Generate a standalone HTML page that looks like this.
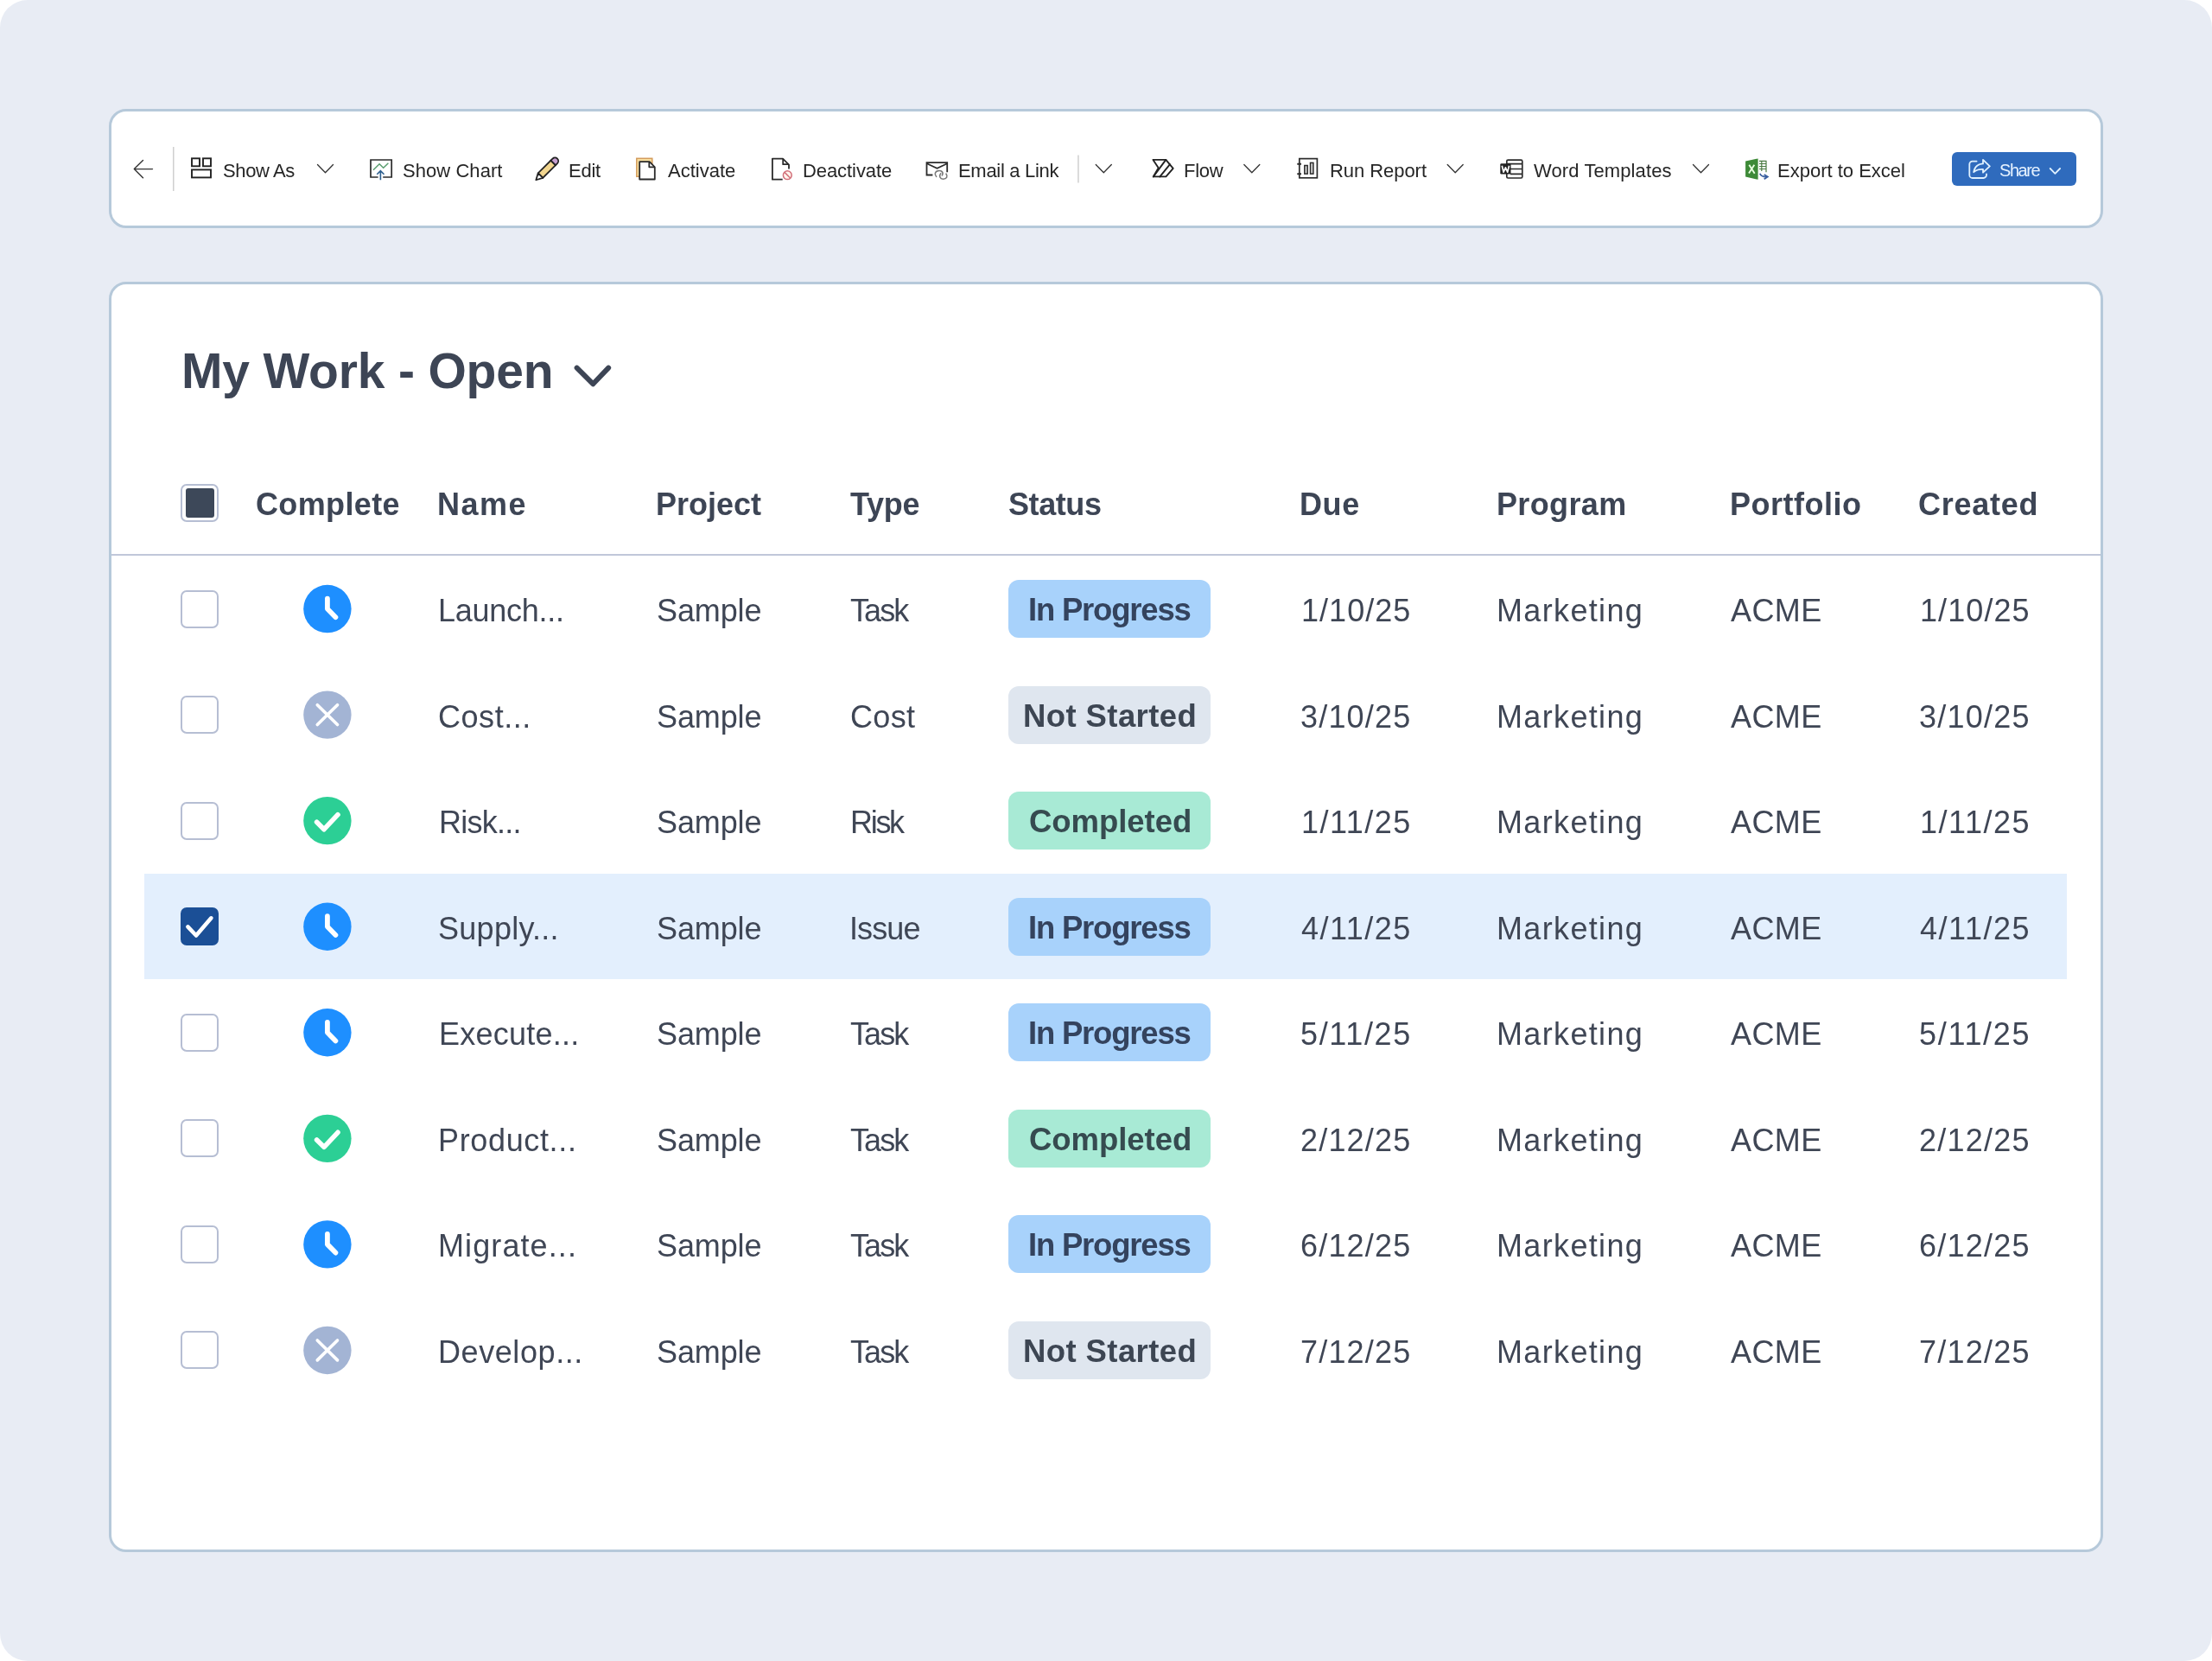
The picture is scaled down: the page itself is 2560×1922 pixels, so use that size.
<!DOCTYPE html>
<html>
<head>
<meta charset="utf-8">
<style>
html,body{margin:0;padding:0;width:2560px;height:1922px;overflow:hidden;background:#ffffff;}
body{font-family:"Liberation Sans",sans-serif;position:relative;}
#page{position:absolute;left:0;top:0;width:2560px;height:1922px;background:#e8ecf4;border-radius:32px;}
.card{position:absolute;left:126px;width:2302px;background:#fff;border:3px solid #b6c9da;border-radius:20px;}
#tb{top:126px;height:132px;}
#tbl{top:326px;height:1464px;}
.t{position:absolute;white-space:nowrap;line-height:1;will-change:transform;}
.row{position:absolute;left:0;width:2560px;height:122.55px;}
.hl{position:absolute;left:167px;width:2225px;top:0;height:122.55px;background:#e3effd;}
.cb{position:absolute;left:209px;top:39.3px;width:44px;height:44px;box-sizing:border-box;border:2.8px solid #b6bed3;border-radius:7px;background:#fff;}
.cb.on{background:#1b4f96;border-color:#1b4f96;}
.badge{position:absolute;left:1167px;top:27.8px;width:234px;height:67px;border-radius:12px;}
.ip{background:#a8d2fb;}
.ns{background:#dfe6ef;}
.co{background:#a8ead5;}
svg{position:absolute;left:0;top:0;}
</style>
</head>
<body>
<div id="page"></div>
<div class="card" id="tb"></div>
<div class="card" id="tbl"></div>
<div style="position:absolute;left:2259px;top:176px;width:144px;height:39px;border-radius:6px;background:#2f6bbd;"></div>
<div style="position:absolute;left:209px;top:560px;width:44px;height:44px;box-sizing:border-box;border:2.8px solid #b6bed3;border-radius:7px;background:#fff;"></div>
<div style="position:absolute;left:214.5px;top:565.3px;width:33.5px;height:33.5px;border-radius:3px;background:#3d4859;"></div>
<div style="position:absolute;left:129px;width:2302px;top:641px;height:2.2px;background:#c0c7d9;"></div>
<div class="row" style="top:643.30px"><div class="cb"></div><div class="badge ip"></div></div>
<div class="row" style="top:765.85px"><div class="cb"></div><div class="badge ns"></div></div>
<div class="row" style="top:888.40px"><div class="cb"></div><div class="badge co"></div></div>
<div class="row" style="top:1010.95px"><div class="hl"></div><div class="cb on"></div><div class="badge ip"></div></div>
<div class="row" style="top:1133.50px"><div class="cb"></div><div class="badge ip"></div></div>
<div class="row" style="top:1256.05px"><div class="cb"></div><div class="badge co"></div></div>
<div class="row" style="top:1378.60px"><div class="cb"></div><div class="badge ip"></div></div>
<div class="row" style="top:1501.15px"><div class="cb"></div><div class="badge ns"></div></div>
<div class="t" style="left:258.30px;top:186.67px;font-size:22px;color:#262626;letter-spacing:-0.386px">Show As</div>
<div class="t" style="left:465.50px;top:186.67px;font-size:22px;color:#262626;letter-spacing:0.052px">Show Chart</div>
<div class="t" style="left:658.00px;top:186.67px;font-size:22px;color:#262626;letter-spacing:-0.232px">Edit</div>
<div class="t" style="left:772.80px;top:186.67px;font-size:22px;color:#262626;letter-spacing:0.011px">Activate</div>
<div class="t" style="left:928.80px;top:186.67px;font-size:22px;color:#262626;letter-spacing:-0.078px">Deactivate</div>
<div class="t" style="left:1109.20px;top:186.67px;font-size:22px;color:#262626;letter-spacing:-0.312px">Email a Link</div>
<div class="t" style="left:1370.40px;top:186.67px;font-size:22px;color:#262626;letter-spacing:-0.254px">Flow</div>
<div class="t" style="left:1538.90px;top:186.67px;font-size:22px;color:#262626;letter-spacing:-0.055px">Run Report</div>
<div class="t" style="left:1774.50px;top:186.67px;font-size:22px;color:#262626;letter-spacing:0.104px">Word Templates</div>
<div class="t" style="left:2057.40px;top:186.67px;font-size:22px;color:#262626;letter-spacing:0.003px">Export to Excel</div>
<div class="t" style="left:2313.70px;top:186.97px;font-size:20px;color:#e6f2ff;letter-spacing:-1.437px">Share</div>
<div class="t" style="left:210.20px;top:400.74px;font-size:57px;font-weight:bold;color:#3d4555;letter-spacing:-0.169px">My Work - Open</div>
<div class="t" style="left:295.70px;top:566.32px;font-size:36px;font-weight:bold;color:#3d4555;letter-spacing:0.357px">Complete</div>
<div class="t" style="left:506.30px;top:566.32px;font-size:36px;font-weight:bold;color:#3d4555;letter-spacing:1.457px">Name</div>
<div class="t" style="left:759.40px;top:566.32px;font-size:36px;font-weight:bold;color:#3d4555;letter-spacing:0.007px">Project</div>
<div class="t" style="left:983.50px;top:566.32px;font-size:36px;font-weight:bold;color:#3d4555;letter-spacing:-0.243px">Type</div>
<div class="t" style="left:1167.00px;top:566.32px;font-size:36px;font-weight:bold;color:#3d4555;letter-spacing:-0.420px">Status</div>
<div class="t" style="left:1504.10px;top:566.32px;font-size:36px;font-weight:bold;color:#3d4555;letter-spacing:0.606px">Due</div>
<div class="t" style="left:1731.50px;top:566.32px;font-size:36px;font-weight:bold;color:#3d4555;letter-spacing:0.361px">Program</div>
<div class="t" style="left:2002.40px;top:566.32px;font-size:36px;font-weight:bold;color:#3d4555;letter-spacing:0.490px">Portfolio</div>
<div class="t" style="left:2219.90px;top:566.32px;font-size:36px;font-weight:bold;color:#3d4555;letter-spacing:0.740px">Created</div>
<div class="t" style="left:507.00px;top:689.02px;font-size:36px;color:#3f4655;letter-spacing:-0.264px">Launch...</div>
<div class="t" style="left:760.20px;top:689.02px;font-size:36px;color:#3f4655;letter-spacing:-0.128px">Sample</div>
<div class="t" style="left:983.60px;top:689.02px;font-size:36px;color:#3f4655;letter-spacing:-1.940px">Task</div>
<div class="t" style="left:1505.50px;top:689.02px;font-size:36px;color:#3f4655;letter-spacing:1.035px">1/10/25</div>
<div class="t" style="left:1732.10px;top:689.02px;font-size:36px;color:#3f4655;letter-spacing:1.345px">Marketing</div>
<div class="t" style="left:2003.40px;top:689.02px;font-size:36px;color:#3f4655;letter-spacing:0.401px">ACME</div>
<div class="t" style="left:2221.70px;top:689.02px;font-size:36px;color:#3f4655;letter-spacing:1.085px">1/10/25</div>
<div class="t" style="left:1190.10px;top:688.10px;font-size:36.5px;font-weight:bold;color:#34435e;letter-spacing:-1.202px">In Progress</div>
<div class="t" style="left:507.20px;top:811.57px;font-size:36px;color:#3f4655;letter-spacing:0.546px">Cost...</div>
<div class="t" style="left:760.20px;top:811.57px;font-size:36px;color:#3f4655;letter-spacing:-0.128px">Sample</div>
<div class="t" style="left:983.60px;top:811.57px;font-size:36px;color:#3f4655;letter-spacing:0.360px">Cost</div>
<div class="t" style="left:1504.60px;top:811.57px;font-size:36px;color:#3f4655;letter-spacing:1.185px">3/10/25</div>
<div class="t" style="left:1732.10px;top:811.57px;font-size:36px;color:#3f4655;letter-spacing:1.345px">Marketing</div>
<div class="t" style="left:2003.40px;top:811.57px;font-size:36px;color:#3f4655;letter-spacing:0.401px">ACME</div>
<div class="t" style="left:2220.80px;top:811.57px;font-size:36px;color:#3f4655;letter-spacing:1.235px">3/10/25</div>
<div class="t" style="left:1184.00px;top:810.65px;font-size:36.5px;font-weight:bold;color:#3d4653;letter-spacing:0.409px">Not Started</div>
<div class="t" style="left:507.90px;top:934.12px;font-size:36px;color:#3f4655;letter-spacing:-0.733px">Risk...</div>
<div class="t" style="left:760.20px;top:934.12px;font-size:36px;color:#3f4655;letter-spacing:-0.128px">Sample</div>
<div class="t" style="left:983.90px;top:934.12px;font-size:36px;color:#3f4655;letter-spacing:-2.299px">Risk</div>
<div class="t" style="left:1505.50px;top:934.12px;font-size:36px;color:#3f4655;letter-spacing:1.480px">1/11/25</div>
<div class="t" style="left:1732.10px;top:934.12px;font-size:36px;color:#3f4655;letter-spacing:1.345px">Marketing</div>
<div class="t" style="left:2003.40px;top:934.12px;font-size:36px;color:#3f4655;letter-spacing:0.401px">ACME</div>
<div class="t" style="left:2221.70px;top:934.12px;font-size:36px;color:#3f4655;letter-spacing:1.530px">1/11/25</div>
<div class="t" style="left:1190.50px;top:933.20px;font-size:36.5px;font-weight:bold;color:#364b50;letter-spacing:-0.050px">Completed</div>
<div class="t" style="left:507.00px;top:1056.67px;font-size:36px;color:#3f4655;letter-spacing:0.274px">Supply...</div>
<div class="t" style="left:760.20px;top:1056.67px;font-size:36px;color:#3f4655;letter-spacing:-0.128px">Sample</div>
<div class="t" style="left:982.90px;top:1056.67px;font-size:36px;color:#3f4655;letter-spacing:-0.906px">Issue</div>
<div class="t" style="left:1505.60px;top:1056.67px;font-size:36px;color:#3f4655;letter-spacing:1.464px">4/11/25</div>
<div class="t" style="left:1732.10px;top:1056.67px;font-size:36px;color:#3f4655;letter-spacing:1.345px">Marketing</div>
<div class="t" style="left:2003.40px;top:1056.67px;font-size:36px;color:#3f4655;letter-spacing:0.401px">ACME</div>
<div class="t" style="left:2221.80px;top:1056.67px;font-size:36px;color:#3f4655;letter-spacing:1.514px">4/11/25</div>
<div class="t" style="left:1190.10px;top:1055.75px;font-size:36.5px;font-weight:bold;color:#34435e;letter-spacing:-1.202px">In Progress</div>
<div class="t" style="left:507.70px;top:1179.22px;font-size:36px;color:#3f4655;letter-spacing:0.246px">Execute...</div>
<div class="t" style="left:760.20px;top:1179.22px;font-size:36px;color:#3f4655;letter-spacing:-0.128px">Sample</div>
<div class="t" style="left:983.60px;top:1179.22px;font-size:36px;color:#3f4655;letter-spacing:-1.940px">Task</div>
<div class="t" style="left:1504.60px;top:1179.22px;font-size:36px;color:#3f4655;letter-spacing:1.630px">5/11/25</div>
<div class="t" style="left:1732.10px;top:1179.22px;font-size:36px;color:#3f4655;letter-spacing:1.345px">Marketing</div>
<div class="t" style="left:2003.40px;top:1179.22px;font-size:36px;color:#3f4655;letter-spacing:0.401px">ACME</div>
<div class="t" style="left:2220.80px;top:1179.22px;font-size:36px;color:#3f4655;letter-spacing:1.680px">5/11/25</div>
<div class="t" style="left:1190.10px;top:1178.30px;font-size:36.5px;font-weight:bold;color:#34435e;letter-spacing:-1.202px">In Progress</div>
<div class="t" style="left:507.30px;top:1301.77px;font-size:36px;color:#3f4655;letter-spacing:0.648px">Product...</div>
<div class="t" style="left:760.20px;top:1301.77px;font-size:36px;color:#3f4655;letter-spacing:-0.128px">Sample</div>
<div class="t" style="left:983.60px;top:1301.77px;font-size:36px;color:#3f4655;letter-spacing:-1.940px">Task</div>
<div class="t" style="left:1504.60px;top:1301.77px;font-size:36px;color:#3f4655;letter-spacing:1.185px">2/12/25</div>
<div class="t" style="left:1732.10px;top:1301.77px;font-size:36px;color:#3f4655;letter-spacing:1.345px">Marketing</div>
<div class="t" style="left:2003.40px;top:1301.77px;font-size:36px;color:#3f4655;letter-spacing:0.401px">ACME</div>
<div class="t" style="left:2220.80px;top:1301.77px;font-size:36px;color:#3f4655;letter-spacing:1.235px">2/12/25</div>
<div class="t" style="left:1190.50px;top:1300.85px;font-size:36.5px;font-weight:bold;color:#364b50;letter-spacing:-0.050px">Completed</div>
<div class="t" style="left:507.30px;top:1424.32px;font-size:36px;color:#3f4655;letter-spacing:1.095px">Migrate...</div>
<div class="t" style="left:760.20px;top:1424.32px;font-size:36px;color:#3f4655;letter-spacing:-0.128px">Sample</div>
<div class="t" style="left:983.60px;top:1424.32px;font-size:36px;color:#3f4655;letter-spacing:-1.940px">Task</div>
<div class="t" style="left:1504.60px;top:1424.32px;font-size:36px;color:#3f4655;letter-spacing:1.185px">6/12/25</div>
<div class="t" style="left:1732.10px;top:1424.32px;font-size:36px;color:#3f4655;letter-spacing:1.345px">Marketing</div>
<div class="t" style="left:2003.40px;top:1424.32px;font-size:36px;color:#3f4655;letter-spacing:0.401px">ACME</div>
<div class="t" style="left:2220.80px;top:1424.32px;font-size:36px;color:#3f4655;letter-spacing:1.235px">6/12/25</div>
<div class="t" style="left:1190.10px;top:1423.40px;font-size:36.5px;font-weight:bold;color:#34435e;letter-spacing:-1.202px">In Progress</div>
<div class="t" style="left:507.30px;top:1546.87px;font-size:36px;color:#3f4655;letter-spacing:0.579px">Develop...</div>
<div class="t" style="left:760.20px;top:1546.87px;font-size:36px;color:#3f4655;letter-spacing:-0.128px">Sample</div>
<div class="t" style="left:983.60px;top:1546.87px;font-size:36px;color:#3f4655;letter-spacing:-1.940px">Task</div>
<div class="t" style="left:1504.60px;top:1546.87px;font-size:36px;color:#3f4655;letter-spacing:1.185px">7/12/25</div>
<div class="t" style="left:1732.10px;top:1546.87px;font-size:36px;color:#3f4655;letter-spacing:1.345px">Marketing</div>
<div class="t" style="left:2003.40px;top:1546.87px;font-size:36px;color:#3f4655;letter-spacing:0.401px">ACME</div>
<div class="t" style="left:2220.80px;top:1546.87px;font-size:36px;color:#3f4655;letter-spacing:1.235px">7/12/25</div>
<div class="t" style="left:1184.00px;top:1545.95px;font-size:36.5px;font-weight:bold;color:#3d4653;letter-spacing:0.409px">Not Started</div>
<svg width="2560" height="1922" viewBox="0 0 2560 1922">
<g fill="none" stroke="#333" stroke-width="1.4" stroke-linecap="round" stroke-linejoin="round">
 <path d="M176.5 195.6 H155.5 M165.5 185.5 L155.3 195.6 L165.5 205.7"/>
</g>
<g fill="none" stroke="#222" stroke-width="1.9">
 <rect x="222" y="183.3" width="9" height="9"/>
 <rect x="235" y="183.3" width="9" height="9"/>
 <rect x="222" y="196.4" width="22" height="9"/>
</g>
<g fill="none" stroke="#333" stroke-width="1.3" stroke-linecap="round" stroke-linejoin="round">
 <path d="M367.5 190.5 L376.5 199.8 L385.5 190.5"/>
 <path d="M1268.3 190.5 L1277.3 199.8 L1286.3 190.5"/>
 <path d="M1439.8 190.5 L1448.8 199.8 L1457.8 190.5"/>
 <path d="M1675.2 190.5 L1684.2 199.8 L1693.2 190.5"/>
 <path d="M1959.5 190.5 L1968.5 199.8 L1977.5 190.5"/>
</g>
<rect x="200" y="170" width="1.5" height="51" fill="#cfcfcf"/>
<rect x="1247.2" y="179.5" width="1.5" height="32" fill="#cfcfcf"/>
<g fill="none" stroke-linecap="butt">
 <path d="M437.6 205 H429 V185 H453.2 V205 H443.2" stroke="#2b2b2b" stroke-width="1.7"/>
 <path d="M432 196.7 L439.1 189.7 L443.7 194.3 L449.4 188.7" stroke="#5a9e6f" stroke-width="1.5"/>
 <path d="M440.4 208.2 V198 M436.3 201.8 L440.4 197.7 L444.5 201.8" stroke="#2d5f8f" stroke-width="1.6"/>
</g>
<g transform="translate(632.8 195.8) rotate(-45)">
 <path d="M-10.3 -3.9 H10.5 V3.9 H-10.3 Z" fill="#f2d68f" stroke="#222" stroke-width="1.8" stroke-linejoin="round"/>
 <path d="M-17.6 0 L-10.3 -3.9 V3.9 Z" fill="#fff" stroke="#222" stroke-width="1.8" stroke-linejoin="round"/>
 <path d="M10.5 -3.9 H13.4 A3.9 3.9 0 0 1 13.4 3.9 H10.5 Z" fill="#c79fd0" stroke="#222" stroke-width="1.8"/>
</g>
<rect x="736.8" y="183.3" width="18" height="21" fill="#f7dfa0" stroke="#d49c5c" stroke-width="1.5"/>
<path d="M740.2 187.2 H751.7 L757.8 193.3 V207.5 H740.2 Z" fill="#fff" stroke="#2b2b2b" stroke-width="1.8" stroke-linejoin="round"/>
<path d="M751.3 187.2 V193.3 H757.8" fill="none" stroke="#2b2b2b" stroke-width="1.8" stroke-linejoin="round"/>
<path d="M905.7 207.7 H893.9 V183.6 H906 L913 190.6 V195.4" fill="none" stroke="#2b2b2b" stroke-width="1.8" stroke-linejoin="round"/>
<path d="M906.2 183.8 V190.2 H912.8" fill="none" stroke="#2b2b2b" stroke-width="1.8" stroke-linejoin="round"/>
<circle cx="911.3" cy="202.7" r="4.9" fill="#fff3ec" stroke="#d2707a" stroke-width="1.5"/>
<path d="M908 199.4 L914.6 206" stroke="#d2707a" stroke-width="1.5"/>
<path d="M1079.4 202.5 H1072.5 V188.2 H1096.2 V199.3" fill="none" stroke="#2b2b2b" stroke-width="1.8"/>
<path d="M1072.7 189.2 L1084.5 194.8 L1096.2 189.2" fill="none" stroke="#2b2b2b" stroke-width="1.7"/>
<g fill="none" stroke="#7a7a7a" stroke-width="1.6" stroke-linecap="round">
 <path d="M1083.6 204.3 C1081.2 201.5 1082 198.3 1085.8 197.6 C1089.5 197 1092.3 199.2 1090.4 203"/>
 <path d="M1088.7 200.8 C1086.5 203.6 1087.8 207.2 1091.5 207.2 C1095.5 207.2 1097.3 204.5 1095 201.2"/>
</g>
<g fill="none" stroke="#222" stroke-width="1.9" stroke-linejoin="round" stroke-linecap="round">
 <path d="M1334.5 184.9 H1349.3 L1357.7 194.8 L1349.4 204.4 H1334.8 L1340.7 194.3 Z"/>
 <path d="M1349.3 184.9 L1334.8 204.4"/>
 <path d="M1354 190.2 L1342.4 204.4"/>
</g>
<g fill="none" stroke="#2b2b2b" stroke-width="1.7">
 <rect x="1503.8" y="183.6" width="20.6" height="22.2"/>
 <path d="M1501.3 189.7 H1506 M1501.3 201.3 H1506" stroke-width="1.9"/>
 <rect x="1509.8" y="191.5" width="3.4" height="9.6" fill="#d6d6d6" stroke-width="1.5"/>
 <rect x="1516.5" y="188.4" width="3.4" height="12.7" fill="#d6d6d6" stroke-width="1.5"/>
</g>
<g fill="none" stroke="#2b2b2b" stroke-width="1.7">
 <rect x="1743.8" y="185.2" width="18" height="20.8" rx="1.5"/>
 <path d="M1744 189.6 H1761.6 M1748 195.5 H1761.6 M1748 201.3 H1761.6"/>
</g>
<rect x="1736.3" y="189.3" width="12.2" height="12.2" rx="1.2" fill="#222"/>
<path d="M1738.3 191.8 L1740.1 199.2 L1742.4 193.9 L1744.7 199.2 L1746.5 191.8" fill="none" stroke="#fff" stroke-width="1.7" stroke-linejoin="round"/>
<path d="M2020.1 186.6 L2034.6 183.4 V207.8 L2020.1 204.6 Z" fill="#3d8a37"/>
<path d="M2024.3 190.8 L2030.7 200.8 M2030.3 190.8 L2024 200.5" stroke="#e8ffe0" stroke-width="1.9"/>
<g stroke="#4a7a42" stroke-width="1.2" fill="none">
 <path d="M2036 186.4 H2044 V199.3"/>
 <path d="M2036 189.5 H2044 M2036 192.5 H2044 M2036 195.5 H2044 M2038.8 186.4 V198"/>
</g>
<path d="M2036.8 200.8 C2038 204 2041 204.8 2045 204.6" fill="none" stroke="#3a5fa0" stroke-width="1.8"/>
<path d="M2041.7 202 L2045.8 204.6 L2041.7 207.3" fill="none" stroke="#3a5fa0" stroke-width="1.8"/>
<g fill="none" stroke="#dff1ff" stroke-width="1.8" stroke-linecap="round" stroke-linejoin="round">
 <path d="M2287.6 186.6 H2282.8 A3.5 3.5 0 0 0 2279.3 190.1 V202.5 A3.5 3.5 0 0 0 2282.8 206 H2295.5 A3.5 3.5 0 0 0 2299 202.5 V201.3"/>
 <path d="M2295 184.8 L2302.8 192.4 L2295 199.7 V195.9 C2290.5 195.6 2287 196.5 2284.2 199.2 C2285 193.3 2289 190 2295 189.4 Z"/>
 <path d="M2372.7 195 L2378.4 200.8 L2384.1 195"/>
</g>
<path d="M667.6 425.6 L686.4 444.3 L704.2 425.6" fill="none" stroke="#3d4555" stroke-width="5.9" stroke-linecap="round" stroke-linejoin="round"/>
<circle cx="378.9" cy="704.57" r="27.7" fill="#1e8fff"/><path d="M378.9 692.57 V704.57 L388.40 714.27" fill="none" stroke="#fff" stroke-width="5.8" stroke-linecap="round" stroke-linejoin="round"/>
<circle cx="378.9" cy="827.12" r="27.7" fill="#a3b4d4"/><path d="M367.30 815.72 L390.50 838.52 M390.50 815.72 L367.30 838.52" fill="none" stroke="#fff" stroke-width="3.7" stroke-linecap="round"/>
<circle cx="378.9" cy="949.67" r="27.7" fill="#2ccf95"/><path d="M366.60 951.27 L375.00 959.67 L391.00 942.67" fill="none" stroke="#fff" stroke-width="5.6" stroke-linecap="round" stroke-linejoin="round"/>
<circle cx="378.9" cy="1072.22" r="27.7" fill="#1e8fff"/><path d="M378.9 1060.22 V1072.22 L388.40 1081.92" fill="none" stroke="#fff" stroke-width="5.8" stroke-linecap="round" stroke-linejoin="round"/>
<path d="M217.4 1072.42 L227 1082.52 L244.4 1062.32" fill="none" stroke="#fff" stroke-width="4.6" stroke-linecap="round" stroke-linejoin="round"/>
<circle cx="378.9" cy="1194.78" r="27.7" fill="#1e8fff"/><path d="M378.9 1182.78 V1194.78 L388.40 1204.48" fill="none" stroke="#fff" stroke-width="5.8" stroke-linecap="round" stroke-linejoin="round"/>
<circle cx="378.9" cy="1317.33" r="27.7" fill="#2ccf95"/><path d="M366.60 1318.92 L375.00 1327.33 L391.00 1310.33" fill="none" stroke="#fff" stroke-width="5.6" stroke-linecap="round" stroke-linejoin="round"/>
<circle cx="378.9" cy="1439.88" r="27.7" fill="#1e8fff"/><path d="M378.9 1427.88 V1439.88 L388.40 1449.58" fill="none" stroke="#fff" stroke-width="5.8" stroke-linecap="round" stroke-linejoin="round"/>
<circle cx="378.9" cy="1562.43" r="27.7" fill="#a3b4d4"/><path d="M367.30 1551.03 L390.50 1573.83 M390.50 1551.03 L367.30 1573.83" fill="none" stroke="#fff" stroke-width="3.7" stroke-linecap="round"/>
</svg>
</body>
</html>
